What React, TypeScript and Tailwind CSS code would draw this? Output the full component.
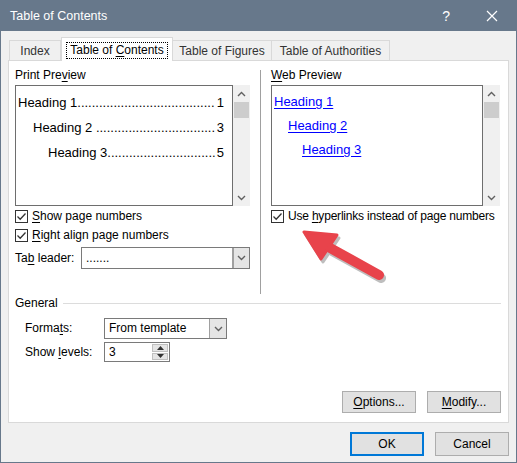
import React from 'react';

const U: React.FC<{ children: React.ReactNode }> = ({ children }) => (
  <span className="underline underline-offset-2">{children}</span>
);

const Chevron: React.FC<{ down?: boolean }> = ({ down }) => (
  <svg width="9" height="6" viewBox="0 0 9 6" className="text-[#606060]">
    <path
      d={down ? 'M1 1 L4.5 4.5 L8 1' : 'M1 5 L4.5 1.5 L8 5'}
      fill="none"
      stroke="currentColor"
      strokeWidth="1.4"
    />
  </svg>
);

const ScrollBar: React.FC = () => (
  <div className="w-[17px] h-full bg-[#f0f0f0] flex flex-col items-center">
    <div className="h-[17px] flex items-center justify-center">
      <Chevron />
    </div>
    <div className="w-[15px] h-[16px] bg-[#cdcdcd]" />
    <div className="flex-1" />
    <div className="h-[17px] flex items-center justify-center">
      <Chevron down />
    </div>
  </div>
);

const CheckBox: React.FC<{ label: React.ReactNode }> = ({ label }) => (
  <div className="flex items-center h-[17px] gap-[4px] whitespace-nowrap">
    <div className="w-[13px] h-[13px] shrink-0 border border-[#333] bg-white flex items-center justify-center">
      <svg width="11" height="11" viewBox="0 0 11 11">
        <path d="M1.5 5.5 L4.2 8.2 L9.5 2.5" fill="none" stroke="#333" strokeWidth="1.3" />
      </svg>
    </div>
    <span>{label}</span>
  </div>
);

const Leader: React.FC<{ name: string; dots: number; num: string; indent: string }> = ({
  name,
  dots,
  num,
  indent,
}) => (
  <div className={`flex items-center justify-between h-[25px] pr-[8px] ${indent}`}>
    <span className="whitespace-nowrap">
      {name}
      {'.'.repeat(dots)}
    </span>
    <span>{num}</span>
  </div>
);

const Button: React.FC<{ children: React.ReactNode; primary?: boolean; h?: string }> = ({
  children,
  primary,
  h = 'h-[22px]',
}) => (
  <div
    className={`w-[74px] ${h} flex items-center justify-center bg-[#e1e1e1] ${
      primary ? 'border-2 border-[#0078d7]' : 'border border-[#adadad]'
    }`}
  >
    {children}
  </div>
);

export default function App() {
  return (
    <div className="relative w-[517px] h-[463px] border border-[#67788b] bg-[#f0f0f0] flex flex-col text-[12px] text-black font-['Liberation_Sans',Arial,sans-serif] leading-[15px]">
      {/* title bar */}
      <div className="h-[30px] bg-[#67788b] flex items-center text-white shrink-0">
        <span className="pl-[9px] text-[12.5px]">Table of Contents</span>
        <div className="flex-1" />
        <span className="text-[14px] mr-[36px]">?</span>
        <svg width="12" height="12" viewBox="0 0 12 12" className="mr-[18px]">
          <path d="M1 1 L11 11 M11 1 L1 11" stroke="white" strokeWidth="1.2" />
        </svg>
      </div>

      {/* tabs */}
      <div className="mt-[6px] h-[23px] pl-[8px] flex items-end shrink-0 text-[#333]">
        <div className="w-[52px] h-[20px] pt-[1px] border border-b-0 border-[#d9d9d9] flex items-center justify-center">
          Index
        </div>
        <div className="relative z-10 -mb-px w-[112px] h-[24px] pt-[1px] border border-b-0 border-[#d9d9d9] bg-white flex items-center justify-center text-black">
          <span className="outline outline-1 outline-dotted outline-black px-[3px]">
            Table of <U>C</U>ontents
          </span>
        </div>
        <div className="w-[99px] h-[20px] pt-[1px] border border-b-0 border-l-0 border-[#d9d9d9] flex items-center justify-center">
          Table of Figures
        </div>
        <div className="w-[118px] h-[20px] pt-[1px] border border-b-0 border-l-0 border-[#d9d9d9] flex items-center justify-center">
          Table of Authorities
        </div>
      </div>

      {/* panel */}
      <div className="mx-[7px] h-[363px] border border-[#d9d9d9] bg-white flex flex-col shrink-0">
        <div className="h-[233px] flex pl-[6px]">
          {/* left column */}
          <div className="w-[235px] pt-[7px] flex flex-col">
            <div className="h-[15px]">
              Print Pre<U>v</U>iew
            </div>
            <div className="mt-[2px] h-[121px] flex">
              <div className="w-[218px] border border-[#6e6e6e] text-[13px] text-black pt-[4px] pl-[2px]">
                <Leader name="Heading 1" dots={38} num="1" indent="" />
                <Leader name="Heading 2 " dots={33} num="3" indent="pl-[15px]" />
                <Leader name="Heading 3" dots={30} num="5" indent="pl-[30px]" />
              </div>
              <ScrollBar />
            </div>
            <div className="mt-[2px] flex flex-col gap-[2px]">
              <CheckBox label={<><U>S</U>how page numbers</>} />
              <CheckBox label={<><U>R</U>ight align page numbers</>} />
            </div>
            <div className="mt-[3px] flex items-center">
              <span className="w-[66px]">
                Ta<U>b</U> leader:
              </span>
              <div className="w-[169px] h-[22px] border border-[#7a7a7a] flex">
                <div className="flex-1 pl-[4px] flex items-center">.......</div>
                <div className="w-[17px] bg-[#e5e5e5] border-l-2 border-[#a0a0a0] flex items-center justify-center">
                  <Chevron down />
                </div>
              </div>
            </div>
          </div>

          {/* separator */}
          <div className="ml-[10px] mt-[9px] w-px h-[224px] bg-[#a0a0a0]" />

          {/* right column */}
          <div className="ml-[10px] w-[230px] pt-[7px] flex flex-col">
            <div className="h-[15px]">
              <U>W</U>eb Preview
            </div>
            <div className="mt-[2px] h-[121px] flex">
              <div className="w-[212px] border border-[#6e6e6e] text-[13px] text-[#0000ff] pt-[8px] pl-[2px] flex flex-col gap-[8px]">
                <span className="underline underline-offset-2 leading-[16px]">Heading 1</span>
                <span className="underline underline-offset-2 leading-[16px] pl-[14px]">Heading 2</span>
                <span className="underline underline-offset-2 leading-[16px] pl-[28px]">Heading 3</span>
              </div>
              <ScrollBar />
            </div>
            <div className="mt-[2px] tracking-[-0.2px]">
              <CheckBox
                label={
                  <>
                    Use <U>h</U>yperlinks instead of page numbers
                  </>
                }
              />
            </div>
          </div>
        </div>

        {/* general */}
        <div className="mt-[2px] pl-[6px] pr-[7px] flex items-center h-[15px]">
          <span>General</span>
          <div className="flex-1 ml-[5px] h-px bg-[#dcdcdc]" />
        </div>
        <div className="mt-[7px] pl-[16px] flex items-center">
          <span className="w-[79px]">
            Forma<U>t</U>s:
          </span>
          <div className="w-[123px] h-[21px] border border-[#7a7a7a] flex">
            <div className="flex-1 pl-[4px] flex items-center">From template</div>
            <div className="w-[17px] bg-[#e5e5e5] border-l border-[#a0a0a0] flex items-center justify-center">
              <Chevron down />
            </div>
          </div>
        </div>
        <div className="mt-[3px] pl-[16px] flex items-center">
          <span className="w-[79px]">
            Show <U>l</U>evels:
          </span>
          <div className="w-[66px] h-[20px] border border-[#7a7a7a] flex">
            <div className="flex-1 pl-[4px] flex items-center">3</div>
            <div className="w-[16px] my-[1px] mr-px flex flex-col gap-px">
              <div className="flex-1 bg-[#e5e5e5] border border-[#c0c0c0] flex items-center justify-center">
                <svg width="7" height="4" viewBox="0 0 7 4">
                  <path d="M0 4 L3.5 0 L7 4 Z" fill="#333" />
                </svg>
              </div>
              <div className="flex-1 bg-[#e5e5e5] border border-[#c0c0c0] flex items-center justify-center">
                <svg width="7" height="4" viewBox="0 0 7 4">
                  <path d="M0 0 L3.5 4 L7 0 Z" fill="#333" />
                </svg>
              </div>
            </div>
          </div>
        </div>
        <div className="mt-[29px] pr-[7px] flex justify-end gap-[11px]">
          <Button>
            <span>
              <U>O</U>ptions...
            </span>
          </Button>
          <Button>
            <span>
              <U>M</U>odify...
            </span>
          </Button>
        </div>
      </div>

      {/* footer */}
      <div className="mt-[9px] pr-[7px] flex justify-end gap-[11px]">
        <Button primary h="h-[24px]">OK</Button>
        <Button h="h-[24px]">Cancel</Button>
      </div>

      {/* red arrow annotation */}
      <svg
        className="absolute left-0 top-0 pointer-events-none"
        width="517"
        height="463"
        viewBox="0 0 517 463"
      >
        <g opacity="0.25" transform="translate(2 3)">
          <line x1="378" y1="274" x2="322" y2="243" stroke="#000" strokeWidth="10" strokeLinecap="round" />
          <path d="M303 231 L336 234 L320 258 Z" fill="#000" stroke="#000" strokeWidth="3" strokeLinejoin="round" />
        </g>
        <line x1="378" y1="274" x2="322" y2="243" stroke="#e8434b" strokeWidth="10" strokeLinecap="round" />
        <path d="M303 231 L336 234 L320 258 Z" fill="#e8434b" stroke="#e8434b" strokeWidth="3" strokeLinejoin="round" />
      </svg>
    </div>
  );
}
